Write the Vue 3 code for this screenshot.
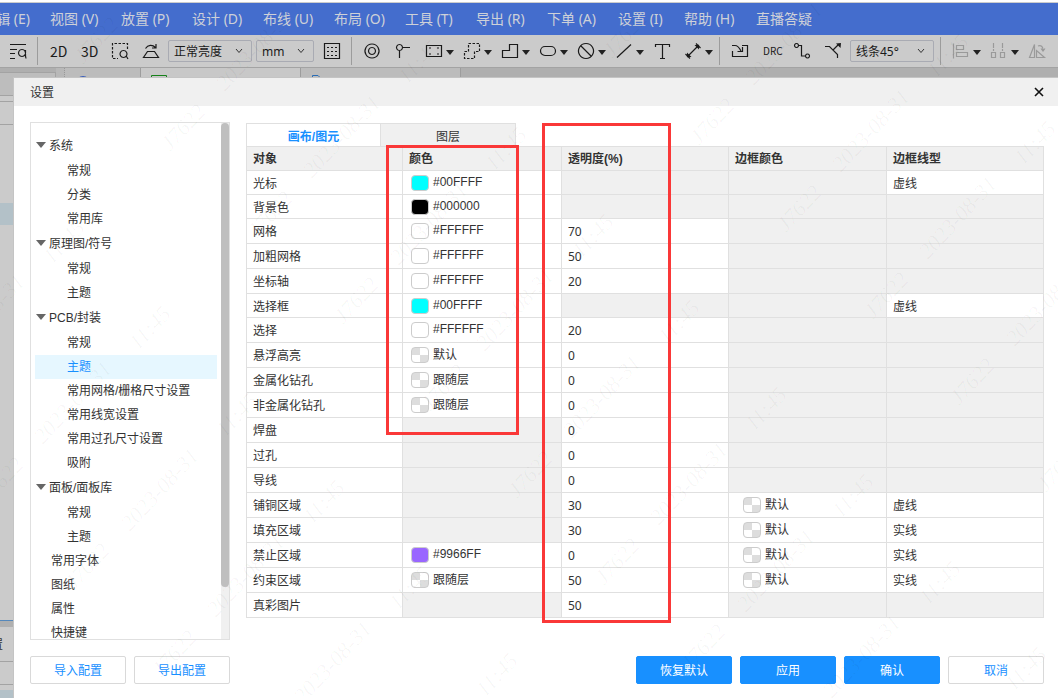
<script setup>
import { ref } from 'vue'

const menus = ['编辑 (E)', '视图 (V)', '放置 (P)', '设计 (D)', '布线 (U)', '布局 (O)', '工具 (T)', '导出 (R)', '下单 (A)', '设置 (I)', '帮助 (H)', '直播答疑']

const tools = [
  { label: '查找', paths: [{ d: 'M0 1.5H16M0 6.5H7M0 10.5H5M0 15.5H5' }, { d: 'M12 6.5a3.5 3.5 0 1 0 .01 0M15.5 7V13L16 15.5' }] },
  { sep: true },
  { label: '2D', text: '2D' },
  { label: '3D', text: '3D' },
  { label: '框选缩放', paths: [{ d: 'M15.5 6V.5H.5V15.5H6', dash: true }, { d: 'M11.5 7.5a3.5 3.5 0 1 0 .01 0M14.5 13.5L16 16' }] },
  { label: '翻板', paths: [{ d: 'M4.5 8.5H11.5L15.5 14.5H.5ZM2.5 5.5C5 1.5 9.500 1.500 12.500 4.500M13 1V5H9' }] },
  { label: '亮度', select: ['正常亮度'], size: 'wide' },
  { label: '单位', select: ['mm'], size: 'narrow' },
  { label: '网格', paths: [{ d: 'M.5 .5H15.500V15.500H.5Z' }, { d: 'M3 4.5H5M7 4.5H9M11 4.500H13M3 8.500H5M7 8.500H9M11 8.500H13M3 12.500H5M7 12.500H9M11 12.500H13' }] },
  { sep: true },
  { label: '过孔', paths: [{ d: 'M8 1a7 7 0 1 0 .01 0M8 4.500a3.500 3.500 0 1 0 .01 0' }] },
  { label: '测试点', paths: [{ d: 'M4.500 1.500a3 3 0 1 0 .01 0M7.500 4.500H15M4.500 7.500V15' }] },
  { label: '器件', drop: true, paths: [{ d: 'M.5 2.500H15.500V13.500H.5Z' }, { d: 'M3 5H5M11 5H13M3 11H5M11 11H13' }] },
  { label: '复用图块', drop: true, paths: [{ d: 'M4.500 .5H15.500V8.500H10.500V15.500H.5V8.500H4.500Z', dash: true }] },
  { label: '铺铜', drop: true, paths: [{ d: 'M7.500 1.500H15.500V14.500H.5V7.500H7.500Z' }] },
  { label: '槽孔', drop: true, paths: [{ d: 'M5 3.500H11A4.500 4.500 0 0 1 11 12.500H5A4.500 4.500 0 0 1 5 3.500Z' }] },
  { label: '禁止区域', drop: true, paths: [{ d: 'M8 .5a7.500 7.500 0 1 0 .01 0M3 3L13 13' }] },
  { label: '线条', drop: true, paths: [{ d: 'M1 14.500L15 1.500' }] },
  { label: '文本', paths: [{ d: 'M1.500 4V1.500H15.500V4M8.500 1.500V15.500M6 15.500H11' }] },
  { label: '尺寸', drop: true, paths: [{ d: 'M2 14L14 2M11 .500L15.500 5M.5 11L5 15.500' }, { d: 'M2 14V9.500L6.500 14ZM14 2V6.500L9.500 2Z', fill: true }] },
  { sep: true },
  { label: '导入变更', paths: [{ d: 'M10 2.500H15.500V13.500H.5V8M0 2.500H3C5.500 2.500 7 4 9 8M10.500 4V8.500H5.500' }] },
  { label: 'DRC', text: 'DRC', small: true },
  { label: '布线', paths: [{ d: 'M2.500 .5a2 2 0 1 0 .01 0M4.500 2.500H7.500V13H11.500M13.500 11a2 2 0 1 0 .01 0' }] },
  { label: '优化', paths: [{ d: 'M0 3.500H4.500L12.500 11.500V15M8 7L13 2' }, { d: 'M11 0.500L16 0L15.500 5Z', fill: true }] },
  { label: '线条角度', select: ['线条45°'], size: 'wide' },
  { sep: true },
  { label: '对齐', drop: true, off: true, paths: [{ d: 'M.5 .5V15.500M3.500 2.500H10.500V6.500H3.500ZM3.500 9.500H14.500V13.500H3.500Z' }] },
  { label: '分布', drop: true, off: true, paths: [{ d: 'M2.500 0V5M2.500 6V8M11.500 0V5M11.500 6V8M.5 9.500H4.500V14.500H.5ZM9.500 9.500H13.500V14.500H9.500Z' }] },
  { label: '镜像', off: true, paths: [{ d: 'M.5 14.500L5.500 1.500V14.500ZM7.500 14.500V7.500L15.500 14.500ZM9 3C12 1.500 14 4 14 7M12 5.500L14 8L16 5.500' }] }
]

const tree = [
  { t: '系统', g: 1 }, { t: '常规' }, { t: '分类' }, { t: '常用库' },
  { t: '原理图/符号', g: 1 }, { t: '常规' }, { t: '主题' },
  { t: 'PCB/封装', g: 1 }, { t: '常规' }, { t: '主题', on: 1 }, { t: '常用网格/栅格尺寸设置' }, { t: '常用线宽设置' }, { t: '常用过孔尺寸设置' }, { t: '吸附' },
  { t: '面板/面板库', g: 1 }, { t: '常规' }, { t: '主题' },
  { t: '常用字体', r: 1 }, { t: '图纸', r: 1 }, { t: '属性', r: 1 }, { t: '快捷键', r: 1 }
]

const rows = ref([
  { name: '光标', color: '#00FFFF', line: '虚线' },
  { name: '背景色', color: '#000000' },
  { name: '网格', color: '#FFFFFF', op: '70' },
  { name: '加粗网格', color: '#FFFFFF', op: '50' },
  { name: '坐标轴', color: '#FFFFFF', op: '20' },
  { name: '选择框', color: '#00FFFF', line: '虚线' },
  { name: '选择', color: '#FFFFFF', op: '20' },
  { name: '悬浮高亮', color: '默认', op: '0' },
  { name: '金属化钻孔', color: '跟随层', op: '0' },
  { name: '非金属化钻孔', color: '跟随层', op: '0' },
  { name: '焊盘', op: '0' },
  { name: '过孔', op: '0' },
  { name: '导线', op: '0' },
  { name: '铺铜区域', op: '30', edge: '默认', line: '虚线' },
  { name: '填充区域', op: '30', edge: '默认', line: '实线' },
  { name: '禁止区域', color: '#9966FF', op: '0', edge: '默认', line: '实线' },
  { name: '约束区域', color: '跟随层', op: '50', edge: '默认', line: '实线' },
  { name: '真彩图片', op: '50' }
])

const isHex = (c) => c[0] === '#'
const swatchStyle = (c) => (isHex(c) ? { background: c } : null)

/* Diagonal watermark: three strings repeated on a skewed lattice. */
const marks = []
for (const [text, x0, y0] of [['J7622', 170, 152], ['2023-08-31', 312, 179], ['11:45', 494, 172]]) {
  for (let i = -8; i <= 10; i++) {
    for (let j = -4; j <= 4; j++) {
      const x = Math.round(x0 + i * 86.7 + j * 269)
      const y = Math.round(y0 + i * 86.7 - j * 266)
      if (x > -50 && x < 1050 && y > 20 && y < 740) marks.push({ text, x, y })
    }
  }
}
</script>

<template>
  <div class="page">
    <div class="titlebar"></div>
    <nav class="menubar">
      <button v-for="m in menus" :key="m" type="button">{{ m }}</button>
    </nav>
    <div class="toolbar">
      <template v-for="(t, i) in tools" :key="i">
        <span v-if="t.sep" class="sep"></span>
        <label v-else-if="t.select" class="pick" :class="t.size">
          <select :aria-label="t.label">
            <option v-for="o in t.select" :key="o">{{ o }}</option>
          </select>
          <svg class="chev" viewBox="0 0 8 6"><path d="M1 1L4 4.500L7 1" /></svg>
        </label>
        <button v-else type="button" class="tool" :class="{ drop: t.drop, off: t.off }" :aria-label="t.label">
          <span v-if="t.text" class="tool-text" :class="{ small: t.small }">{{ t.text }}</span>
          <svg v-else class="icon" viewBox="0 0 16 16">
            <path v-for="(p, k) in t.paths" :key="k" :d="p.d" :class="{ dash: p.dash, fill: p.fill }" />
          </svg>
          <svg v-if="t.drop" class="caret" viewBox="0 0 8 5"><path d="M0 0H8L4 5Z" /></svg>
        </button>
      </template>
    </div>

    <div class="workspace">
      <div class="backdrop">
        <div class="doc-tabs">
          <span class="panel-tab"></span>
          <span class="grip"></span>
          <span class="doc-tab first"><svg viewBox="0 0 16 16"><circle cx="8" cy="8" r="7" fill="#3a5ebc" /></svg></span>
          <span class="doc-tab current"><svg viewBox="0 0 16 16"><path d="M.5 6V.5H15.500V6" fill="none" stroke="#16811a" /></svg></span>
          <span class="doc-tab"><svg viewBox="0 0 16 16"><path d="M1.500 8V.5H7L10 3.500V8" fill="none" stroke="#2b6db5" /></svg></span>
        </div>
        <div class="strip">
          <i class="a"></i><i class="b"></i><i class="c"></i><i class="d"></i><i class="e"></i><i class="f"></i>
          <b>置</b><i class="g"></i><i class="h"></i><i class="k"></i>
        </div>
      </div>

      <section class="dialog" role="dialog" aria-labelledby="dialog-title">
        <header class="dialog-head">
          <h1 id="dialog-title">设置</h1>
          <button type="button" class="close" aria-label="关闭">
            <svg viewBox="0 0 10 10"><path d="M1 1L9 9M9 1L1 9" /></svg>
          </button>
        </header>

        <div class="dialog-body">
          <aside class="sidebar">
            <ul class="tree">
              <li v-for="(n, i) in tree" :key="i" :class="{ group: n.g, root: n.r, on: n.on }">
                <svg v-if="n.g" class="twist" viewBox="0 0 10 6"><path d="M0 0H10L5 6Z" /></svg>
                <button type="button">{{ n.t }}</button>
              </li>
            </ul>
            <div class="track"><div class="thumb"></div></div>
          </aside>

          <main class="content">
            <div class="tabs" role="tablist">
              <button type="button" role="tab" aria-selected="true" class="tab active">画布/图元</button>
              <button type="button" role="tab" aria-selected="false" class="tab">图层</button>
            </div>
            <table>
              <colgroup>
                <col class="c1" /><col class="c2" /><col class="c3" /><col class="c4" /><col class="c5" />
              </colgroup>
              <thead>
                <tr><th>对象</th><th>颜色</th><th>透明度(%)</th><th>边框颜色</th><th>边框线型</th></tr>
              </thead>
              <tbody>
                <tr v-for="r in rows" :key="r.name" :class="{ tall: r.op }">
                  <td class="words">{{ r.name }}</td>
                  <td :class="{ na: !r.color }">
                    <button v-if="r.color" type="button" class="color">
                      <span class="swatch" :style="swatchStyle(r.color)"></span><span class="value" :class="{ hex: isHex(r.color) }">{{ r.color }}</span>
                    </button>
                  </td>
                  <td :class="{ na: !r.op }">
                    <input v-if="r.op" v-model="r.op" type="text" class="num" :aria-label="r.name + ' 透明度'" />
                  </td>
                  <td :class="{ na: !r.edge }">
                    <button v-if="r.edge" type="button" class="color edge">
                      <span class="swatch"></span><span class="value">{{ r.edge }}</span>
                    </button>
                  </td>
                  <td class="words" :class="{ na: !r.line }">{{ r.line }}</td>
                </tr>
              </tbody>
            </table>
            <div class="mark mark-color"></div>
            <div class="mark mark-opacity"></div>
          </main>
        </div>

        <footer class="dialog-foot">
          <button type="button" class="btn">导入配置</button>
          <button type="button" class="btn">导出配置</button>
          <span class="spacer"></span>
          <button type="button" class="btn primary">恢复默认</button>
          <button type="button" class="btn primary">应用</button>
          <button type="button" class="btn primary">确认</button>
          <button type="button" class="btn">取消</button>
        </footer>
      </section>
    </div>

    <svg class="watermark" aria-hidden="true">
      <text v-for="(m, i) in marks" :key="i" :transform="`translate(${m.x} ${m.y}) rotate(-47)`">{{ m.text }}</text>
    </svg>
  </div>
</template>

<style>
body {
  margin: 0;
}
</style>

<style scoped>
.page {
  position: relative;
  display: flex;
  flex-direction: column;
  height: 100vh;
  overflow: hidden;
  background: #cbcbcb;
  color: #333;
  font: 12px/16px "Liberation Sans", "Noto Sans CJK SC", sans-serif;
}
button, input, select {
  font: inherit;
  color: inherit;
  margin: 0;
  padding: 0;
  border: 0;
  background: none;
}
.titlebar {
  flex: none;
  height: 2px;
  background: #fff;
  border-bottom: 1px solid #ccc;
}
.menubar {
  flex: none;
  display: flex;
  gap: 20px;
  height: 32px;
  padding-left: 50px;
  background: #446dcd;
  color: #ced1d8;
  font: 14px/32px "Noto Sans", "Noto Sans CJK SC", sans-serif;
}
.menubar button {
  flex: none;
  min-width: 51px;
  text-align: left;
  white-space: nowrap;
}
.menubar button:first-child {
  margin-left: -71px;
  text-align: right;
}
.menubar button:nth-child(10) {
  min-width: 46px;
}
.menubar button:nth-child(11) {
  min-width: 52px;
}
.toolbar {
  flex: none;
  display: flex;
  align-items: center;
  height: 32px;
  padding-left: 2px;
  background: #cbcbcb;
  border-bottom: 1px solid #a3a3a3;
  color: #1a1a1a;
}
.sep {
  flex: none;
  width: 1px;
  height: 28px;
  margin: 0 4px;
  background: #9c9c9c;
}
.tool {
  flex: none;
  display: flex;
  align-items: center;
  justify-content: flex-start;
  width: 31px;
  height: 28px;
  padding-left: 8px;
}
.drop {
  width: 38px;
  gap: 4px;
}
.icon {
  flex: none;
  width: 16px;
  height: 16px;
  overflow: visible;
  fill: none;
  stroke: #1a1a1a;
  stroke-width: 1.2;
}
.icon .dash {
  stroke-dasharray: 2.5 1.5;
}
.icon .fill {
  fill: #1a1a1a;
  stroke: none;
}
.off .icon {
  stroke: #9a9a9a;
}
.caret {
  flex: none;
  width: 8px;
  height: 5px;
  margin-top: 3px;
  fill: #222;
}
.tool-text {
  font: 14px/16px "Noto Sans CJK SC", sans-serif;
}
.tool-text.small {
  font-size: 10px;
}
.pick {
  flex: none;
  display: grid;
  align-items: center;
  box-sizing: border-box;
  height: 22px;
  margin: 0 2px;
  border: 1px solid #a9abb3;
  border-radius: 2px;
}
.wide {
  width: 84px;
}
.narrow {
  width: 58px;
}
.pick select {
  grid-area: 1 / 1;
  box-sizing: border-box;
  width: 100%;
  height: 20px;
  padding: 1px 0 0 5px;
  appearance: none;
  font: 12px/18px "Noto Sans", "Noto Sans CJK SC", sans-serif;
}
.chev {
  grid-area: 1 / 1;
  justify-self: end;
  width: 8px;
  height: 6px;
  margin-right: 8px;
  fill: none;
  stroke: #333;
  pointer-events: none;
}
.workspace {
  flex: 1;
  min-height: 0;
  display: grid;
  grid-template: minmax(0, 1fr) / minmax(0, 1fr);
}
.backdrop {
  grid-area: 1 / 1;
  min-height: 0;
  overflow: hidden;
}
.doc-tabs {
  display: flex;
  height: 27px;
  background: #afafaf;
}
.panel-tab {
  box-sizing: border-box;
  width: 56px;
  margin-top: 4px;
  background: #bdbdbd;
  border-top: 1px solid #a3a3a3;
  border-right: 1px solid #a3a3a3;
}
.grip {
  width: 8px;
  background: #b8b8b8;
  border-right: 1px dotted #999;
}
.doc-tab {
  box-sizing: border-box;
  width: 160px;
  padding: 7px 0 0 10px;
  background: #bcbcbc;
  border-right: 1px solid #9d9d9d;
}
.doc-tab svg {
  width: 16px;
  height: 16px;
}
.doc-tab.first {
  width: 76px;
}
.doc-tab.current {
  background: #c8c8c8;
}
.strip {
  width: 14px;
}
.strip i {
  display: block;
  height: 1px;
  background: #a3a3a3;
}
.strip .b {
  margin-top: 5px;
}
.strip .c {
  margin-top: 22px;
}
.strip .d {
  height: 22px;
  margin-top: 78px;
  background: #b3c1c8;
}
.strip .e {
  margin-top: 395px;
  background: #5588bb;
}
.strip .f {
  height: 6px;
  background: #b0b0b0;
}
.strip b {
  display: flex;
  justify-content: flex-end;
  width: 3px;
  height: 16px;
  margin-top: 10px;
  overflow: hidden;
  font-weight: 400;
}
.strip .g {
  margin-top: 8px;
}
.strip .h {
  margin-top: 22px;
}
.strip .k {
  height: 10px;
  margin-top: 5px;
  background: #b3c1c8;
}
.dialog {
  grid-area: 1 / 1;
  position: relative;
  display: flex;
  flex-direction: column;
  min-height: 0;
  margin: 9px 0 0 13px;
  border-top: 1px solid #c4c4c4;
  border-left: 1px solid #c4c4c4;
  background: #fff;
}
.dialog-head {
  flex: none;
  display: flex;
  align-items: center;
  justify-content: space-between;
  height: 28px;
  padding: 0 14px 0 16px;
  background: #f0f0f0;
}
.dialog-head h1 {
  margin: 0;
  padding-top: 2px;
  font: inherit;
}
.close {
  display: flex;
}
.close svg {
  width: 10px;
  height: 10px;
  stroke: #111;
  stroke-width: 1.6;
}
.dialog-body {
  flex: 1;
  min-height: 0;
  display: grid;
  grid-template: minmax(0, 1fr) / 200px minmax(0, 1fr);
  gap: 16px;
  padding: 16px 14px 16px 16px;
}
.sidebar {
  display: flex;
  min-height: 0;
  overflow: hidden;
  border: 1px solid #e0e0e0;
}
.tree {
  flex: 1;
  margin: 0;
  padding: 10px 4px 0 4px;
  list-style: none;
}
.tree li {
  display: flex;
  align-items: center;
  height: 24px;
  padding-left: 32px;
}
.tree .root {
  padding-left: 16px;
}
.tree .group {
  height: 26px;
  padding-left: 1px;
  gap: 3px;
}
.tree .on {
  background: #e6f7ff;
  color: #1890ff;
}
.tree button {
  white-space: nowrap;
}
.twist {
  width: 10px;
  height: 6px;
  margin-bottom: 3px;
  fill: #666;
}
.track {
  width: 8px;
  background: #f0f0f0;
}
.thumb {
  height: 90%;
  border-radius: 4px;
  background: #bfbfbf;
}
.content {
  position: relative;
  min-width: 0;
}
.tabs {
  display: flex;
  height: 23px;
  padding-top: 1px;
}
.tab {
  box-sizing: border-box;
  width: 135px;
  padding-top: 3px;
  border-top: 1px solid #e0e0e0;
  border-right: 1px solid #e0e0e0;
  background: #f0f0f0;
}
.tab.active {
  border-left: 1px solid #e0e0e0;
  background: #fff;
  color: #1890ff;
  font-weight: 700;
}
table {
  width: 100%;
  table-layout: fixed;
  border-collapse: collapse;
}
.c1 {
  width: 156px;
}
.c2 {
  width: 159px;
}
.c3 {
  width: 167px;
}
.c4 {
  width: 158px;
}
tr {
  height: 24px;
}
.tall {
  height: 25px;
}
th, td {
  padding: 0 6px;
  border: 1px solid #e0e0e0;
  text-align: left;
}
th {
  background: #f0f0f0;
}
.words {
  padding-top: 2px;
}
.na {
  background: #f0f0f0;
}
.num {
  display: block;
  width: 100%;
  height: 18px;
  font-family: "Noto Sans", sans-serif;
}
.color {
  display: flex;
  align-items: center;
  gap: 4px;
  height: 18px;
  padding-left: 2px;
}
.edge {
  padding-left: 8px;
}
.swatch {
  box-sizing: border-box;
  width: 18px;
  height: 16px;
  border: 1px solid #ccc;
  border-radius: 4px;
  background: conic-gradient(#fff 25%, #ddd 0 50%, #fff 0 75%, #ddd 0);
}
.hex {
  padding-bottom: 2px;
}
.mark {
  position: absolute;
  box-sizing: border-box;
  border: 3px solid #fa3838;
  pointer-events: none;
}
.mark-color {
  left: 140px;
  top: 23px;
  width: 133px;
  height: 290px;
}
.mark-opacity {
  left: 296px;
  top: 1px;
  width: 129px;
  height: 500px;
}
.dialog-foot {
  flex: none;
  display: flex;
  gap: 8px;
  padding: 0 14px 14px 16px;
}
.spacer {
  flex: 1;
}
.btn {
  box-sizing: border-box;
  width: 96px;
  height: 28px;
  padding-top: 2px;
  border: 1px solid #d9d9d9;
  border-radius: 2px;
  background: #fff;
  color: #1890ff;
}
.primary {
  border-color: #1890ff;
  background: #1890ff;
  color: #fff;
}
.watermark {
  position: absolute;
  inset: 0;
  width: 100%;
  height: 100%;
  pointer-events: none;
  fill: #000;
  fill-opacity: 0.035;
  font: italic 22px "Liberation Serif", serif;
}
</style>
